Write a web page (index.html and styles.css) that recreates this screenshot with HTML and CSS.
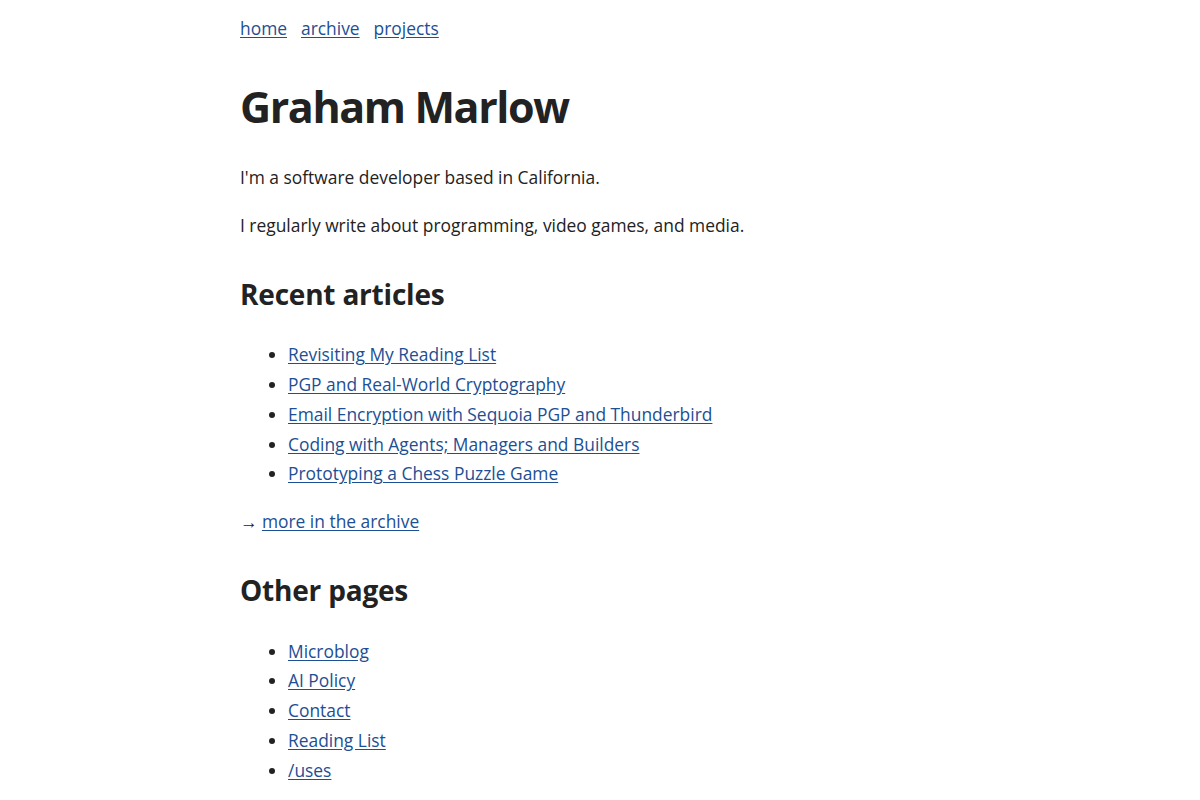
FILE: index.html
```html
<!DOCTYPE html>
<html lang="en">
<head>
<meta charset="utf-8">
<title>Graham Marlow</title>
<link rel="stylesheet" href="styles.css">
</head>
<body>
<div class="page">
  <nav class="nav">
    <a href="#">home</a>
    <a href="#">archive</a>
    <a href="#">projects</a>
  </nav>
  <main>
    <h1 class="title">Graham Marlow</h1>
    <p>I'm a software developer based in California.</p>
    <p>I regularly write about programming, video games, and media.</p>
    <h2 class="section">Recent articles</h2>
    <ul class="links">
      <li><a href="#">Revisiting My Reading List</a></li>
      <li><a href="#">PGP and Real-World Cryptography</a></li>
      <li><a href="#">Email Encryption with Sequoia PGP and Thunderbird</a></li>
      <li><a href="#">Coding with Agents; Managers and Builders</a></li>
      <li><a href="#">Prototyping a Chess Puzzle Game</a></li>
    </ul>
    <p>→ <a href="#">more in the archive</a></p>
    <h2 class="section">Other pages</h2>
    <ul class="links">
      <li><a href="#">Microblog</a></li>
      <li><a href="#">AI Policy</a></li>
      <li><a href="#">Contact</a></li>
      <li><a href="#">Reading List</a></li>
      <li><a href="#">/uses</a></li>
    </ul>
  </main>
</div>
</body>
</html>
```
FILE: styles.css
```css
html, body {
  margin: 0;
  padding: 0;
  background: #ffffff;
}
body {
  font-family: "Open Sans", "Noto Sans", sans-serif;
  font-size: 17.4px;
  line-height: 1.71;
  color: #222222;
}
.page {
  max-width: 720px;
  margin: 0 auto;
  padding: 14px 0 40px;
}
a {
  color: #1c4f94;
  text-decoration: underline;
  text-underline-offset: 2px;
}
.nav {
  display: flex;
  gap: 14px;
}
.title {
  font-size: 43px;
  line-height: 1.2;
  font-weight: 700;
  margin: 37px 0 31px;
  letter-spacing: -1.4px;
}
p {
  margin: 0 0 18px;
}
.section {
  font-size: 28px;
  line-height: 1.2;
  font-weight: 700;
  letter-spacing: -0.2px;
  margin: 37px 0 29px;
}
.links {
  margin: 0 0 18px;
  padding-left: 48px;
}
```
